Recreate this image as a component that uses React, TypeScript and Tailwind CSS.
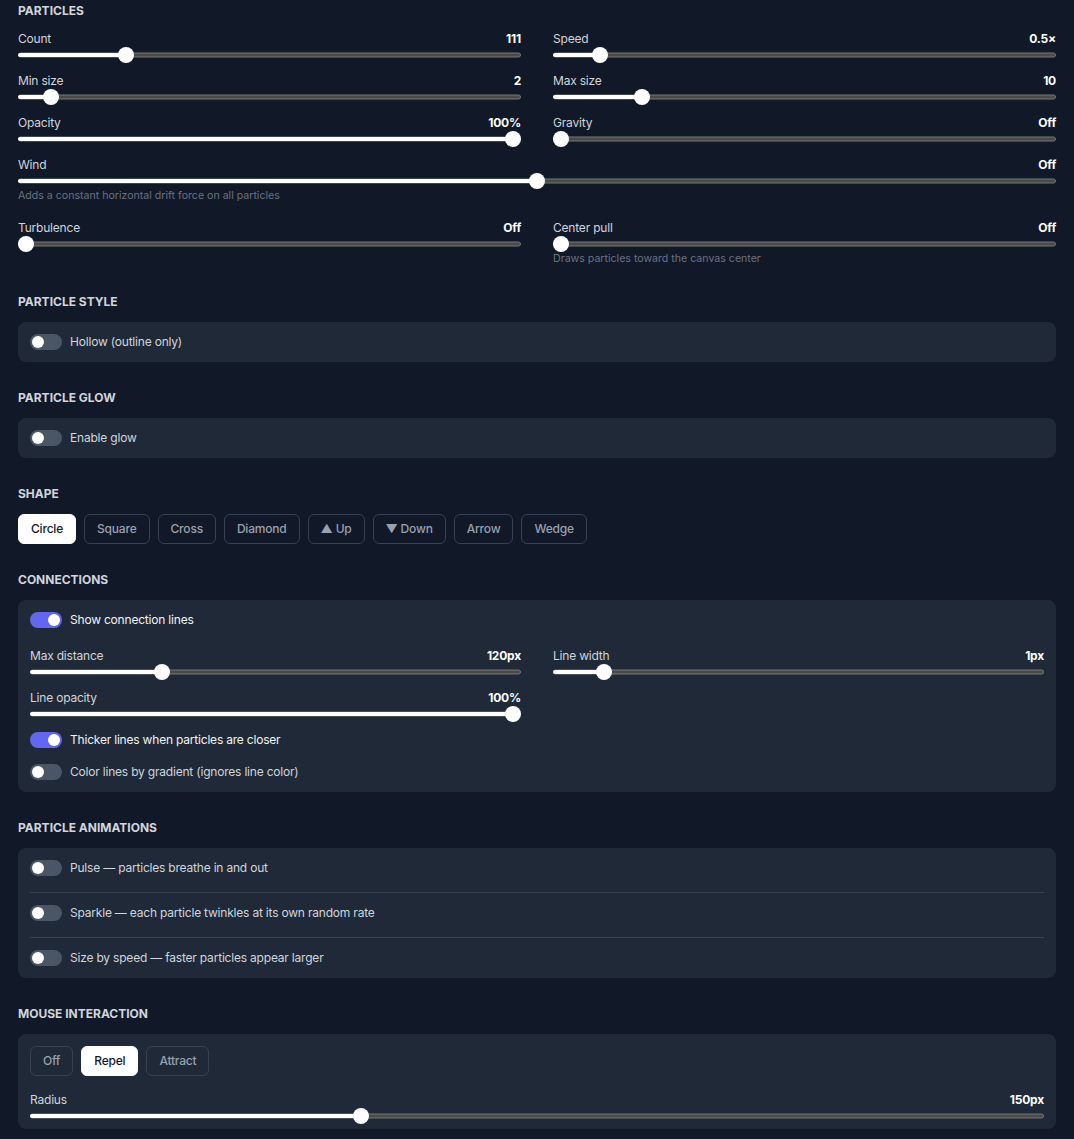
import React from "react";

type SliderRow = {
  label: string;
  value: string;
  pos: number;
  hint?: string;
  wide?: boolean;
};

function Slider({ pos }: { pos: number }) {
  return (
    <div className="relative h-4">
      <div className="absolute inset-x-0 top-1/2 h-[5px] -translate-y-1/2 rounded-full border border-[#767676] bg-[#4a4a4a]" />
      <div
        className="absolute left-0 top-1/2 h-[4px] -translate-y-1/2 rounded-full bg-white"
        style={{ width: `calc(${pos} * (100% - 16px) + 8px)` }}
      />
      <div
        className="absolute top-0 h-4 w-4 rounded-full bg-white"
        style={{ left: `calc(${pos} * (100% - 16px))` }}
      />
    </div>
  );
}

function SliderField({ label, value, pos, hint, wide }: SliderRow) {
  return (
    <div className={wide ? "col-span-2" : ""}>
      <div className="flex items-center justify-between text-xs leading-4">
        <span className="text-gray-300">{label}</span>
        <span className="font-bold text-white">{value}</span>
      </div>
      <Slider pos={pos} />
      {hint && (
        <p
          className={
            "text-[10.6px] leading-[14px] tracking-normal text-gray-500 " +
            (wide ? "mb-[7px]" : "")
          }
        >
          {hint}
        </p>
      )}
    </div>
  );
}

function Toggle({ on, label }: { on?: boolean; label: string }) {
  return (
    <div className="flex items-center gap-2">
      <div
        className={
          "flex h-4 w-8 items-center rounded-full px-0.5 " +
          (on ? "justify-end bg-[#6366f1]" : "justify-start bg-gray-600")
        }
      >
        <div className="h-3 w-3 rounded-full bg-white" />
      </div>
      <span className={"text-xs leading-4 " + (on ? "text-gray-100" : "text-gray-300")}>
        {label}
      </span>
    </div>
  );
}

function Title({ children }: { children: React.ReactNode }) {
  return (
    <h3 className="mb-3 text-xs font-bold uppercase leading-4 tracking-normal text-gray-300">
      {children}
    </h3>
  );
}

function Chip({ label, active }: { label: string; active?: boolean }) {
  return (
    <button
      className={
        "h-[30px] rounded-md border px-3 text-xs font-medium " +
        (active
          ? "border-white bg-white text-gray-900"
          : "border-gray-700 bg-transparent text-gray-400")
      }
    >
      {label}
    </button>
  );
}

const particleRows: SliderRow[] = [
  { label: "Count", value: "111", pos: 0.205 },
  { label: "Speed", value: "0.5×", pos: 0.08 },
  { label: "Min size", value: "2", pos: 0.051 },
  { label: "Max size", value: "10", pos: 0.166 },
  { label: "Opacity", value: "100%", pos: 1 },
  { label: "Gravity", value: "Off", pos: 0 },
  {
    label: "Wind",
    value: "Off",
    pos: 0.5,
    wide: true,
    hint: "Adds a constant horizontal drift force on all particles",
  },
  { label: "Turbulence", value: "Off", pos: 0 },
  {
    label: "Center pull",
    value: "Off",
    pos: 0,
    hint: "Draws particles toward the canvas center",
  },
];

const shapes = ["Circle", "Square", "Cross", "Diamond", "▲ Up", "▼ Down", "Arrow", "Wedge"];

const animations = [
  "Pulse — particles breathe in and out",
  "Sparkle — each particle twinkles at its own random rate",
  "Size by speed — faster particles appear larger",
];

export default function App() {
  return (
    <div
      className="min-h-screen bg-[#111827] px-[18px] pt-[3px] pb-4 tracking-[-0.2px]"
      style={{ fontFamily: "Inter, 'Noto Sans', sans-serif" }}
    >
      <div className="flex flex-col gap-7">
        {/* particles */}
        <section>
          <Title>Particles</Title>
          <div className="grid grid-cols-2 gap-x-8 gap-y-2.5">
            {particleRows.map((r) => (
              <SliderField key={r.label} {...r} />
            ))}
          </div>
        </section>

        <section>
          <Title>Particle style</Title>
          <div className="rounded-lg bg-[#1f2937] p-3">
            <Toggle label="Hollow (outline only)" />
          </div>
        </section>

        <section>
          <Title>Particle glow</Title>
          <div className="rounded-lg bg-[#1f2937] p-3">
            <Toggle label="Enable glow" />
          </div>
        </section>

        <section>
          <Title>Shape</Title>
          <div className="flex flex-wrap gap-2">
            {shapes.map((s, i) => (
              <Chip key={s} label={s} active={i === 0} />
            ))}
          </div>
        </section>

        {/* connections */}
        <section>
          <Title>Connections</Title>
          <div className="rounded-lg bg-[#1f2937] p-3">
            <Toggle on label="Show connection lines" />
            <div className="mt-5 grid grid-cols-2 gap-x-8 gap-y-2.5">
              <SliderField label="Max distance" value="120px" pos={0.26} />
              <SliderField label="Line width" value="1px" pos={0.09} />
              <SliderField label="Line opacity" value="100%" pos={1} />
            </div>
            <div className="mt-2.5">
              <Toggle on label="Thicker lines when particles are closer" />
            </div>
            <div className="mt-4">
              <Toggle label="Color lines by gradient (ignores line color)" />
            </div>
          </div>
        </section>

        <section>
          <Title>Particle animations</Title>
          <div className="rounded-lg bg-[#1f2937] px-3">
            {animations.map((a, i) => (
              <div
                key={a}
                className={
                  i < animations.length - 1
                    ? "border-b border-gray-700 pt-3 pb-4"
                    : "pt-3 pb-3"
                }
              >
                <Toggle label={a} />
              </div>
            ))}
          </div>
        </section>

        <section>
          <Title>Mouse interaction</Title>
          <div className="rounded-lg bg-[#1f2937] px-3 pt-3 pb-[5px]">
            <div className="flex gap-2">
              <Chip label="Off" />
              <Chip label="Repel" active />
              <Chip label="Attract" />
            </div>
            <div className="mt-4">
              <SliderField label="Radius" value="150px" pos={0.324} />
            </div>
          </div>
        </section>
      </div>
    </div>
  );
}
